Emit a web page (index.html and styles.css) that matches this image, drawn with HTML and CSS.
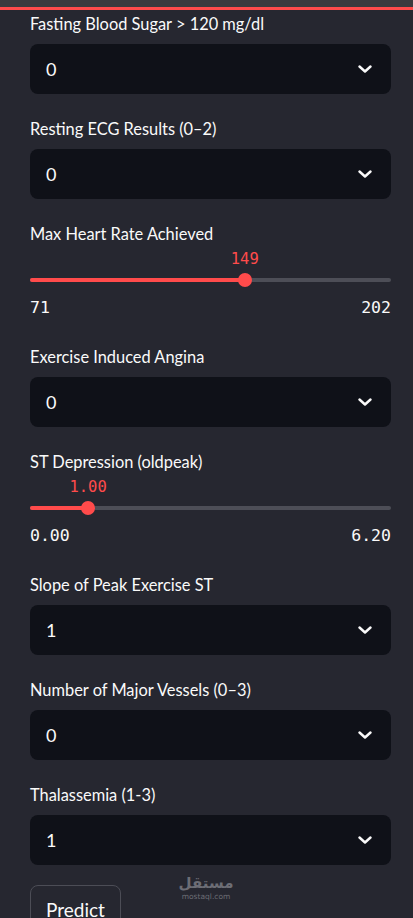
FILE: index.html
```html
<!DOCTYPE html>
<html lang="en">
<head>
  <meta charset="UTF-8">
  <meta name="viewport" content="width=device-width, initial-scale=1.0">
  <title>Heart Disease Prediction</title>
  <link rel="stylesheet" href="styles.css">
</head>
<body>
  <!-- Top decoration -->
  <div class="topbar"></div>
  <div class="decoration"></div>

  <div class="form">
    <div class="field">
      <label class="label">Fasting Blood Sugar &gt; 120 mg/dl</label>
      <div class="select">
        <span>0</span>
        <svg class="chevron" viewBox="0 0 14 8"><polyline points="1.5,1.5 7,6.5 12.5,1.5"/></svg>
      </div>
    </div>

    <div class="field">
      <label class="label">Resting ECG Results (0–2)</label>
      <div class="select">
        <span>0</span>
        <svg class="chevron" viewBox="0 0 14 8"><polyline points="1.5,1.5 7,6.5 12.5,1.5"/></svg>
      </div>
    </div>

    <div class="field slider-field">
      <label class="label">Max Heart Rate Achieved</label>
      <div class="slider">
        <div class="slider-value" style="left: 59.5%">149</div>
        <div class="track">
          <div class="fill" style="width: 59.5%"></div>
          <div class="thumb" style="left: 59.5%"></div>
        </div>
      </div>
      <div class="ticks">
        <span>71</span>
        <span>202</span>
      </div>
    </div>

    <div class="field">
      <label class="label">Exercise Induced Angina</label>
      <div class="select">
        <span>0</span>
        <svg class="chevron" viewBox="0 0 14 8"><polyline points="1.5,1.5 7,6.5 12.5,1.5"/></svg>
      </div>
    </div>

    <div class="field slider-field">
      <label class="label">ST Depression (oldpeak)</label>
      <div class="slider">
        <div class="slider-value" style="left: 16.1%">1.00</div>
        <div class="track">
          <div class="fill" style="width: 16.1%"></div>
          <div class="thumb" style="left: 16.1%"></div>
        </div>
      </div>
      <div class="ticks">
        <span>0.00</span>
        <span>6.20</span>
      </div>
    </div>

    <div class="field">
      <label class="label">Slope of Peak Exercise ST</label>
      <div class="select">
        <span>1</span>
        <svg class="chevron" viewBox="0 0 14 8"><polyline points="1.5,1.5 7,6.5 12.5,1.5"/></svg>
      </div>
    </div>

    <div class="field">
      <label class="label">Number of Major Vessels (0–3)</label>
      <div class="select">
        <span>0</span>
        <svg class="chevron" viewBox="0 0 14 8"><polyline points="1.5,1.5 7,6.5 12.5,1.5"/></svg>
      </div>
    </div>

    <div class="field">
      <label class="label">Thalassemia (1-3)</label>
      <div class="select">
        <span>1</span>
        <svg class="chevron" viewBox="0 0 14 8"><polyline points="1.5,1.5 7,6.5 12.5,1.5"/></svg>
      </div>
    </div>

    <button class="btn">Predict</button>
  </div>

  <!-- Watermark -->
  <div class="watermark">
    <span class="wm-ar">مستقل</span>
    <span class="wm-en">mostaql.com</span>
  </div>
</body>
</html>
```

FILE: styles.css
```css
/* General Reset */
* {
  margin: 0;
  padding: 0;
  box-sizing: border-box;
}

body {
  font-family: 'Lato', 'Noto Sans', sans-serif;
  background: #262730;
  color: #fafafa;
  overflow: hidden;
  position: relative;
  height: 918px;
}

/* Top decoration */
.topbar {
  height: 7px;
  background: #3b3a3e;
}

.decoration {
  height: 3px;
  background: #ff4b4b;
}

/* Form */
.form {
  display: flex;
  flex-direction: column;
  padding: 0 22px 0 30px;
}

.field {
  display: flex;
  flex-direction: column;
  margin-bottom: 21px;
}

.label {
  height: 28px;
  line-height: 28px;
  font-size: 16.4px;
  color: #fafafa;
  margin-bottom: 6px;
}

.select {
  height: 50px;
  background: #0f1118;
  border-radius: 8px;
  display: flex;
  align-items: center;
  justify-content: space-between;
  padding: 0 19px 0 16px;
  font-size: 18px;
}

.chevron {
  width: 14px;
  height: 8px;
  fill: none;
  stroke: #fafafa;
  stroke-width: 2.4;
  stroke-linecap: round;
  stroke-linejoin: round;
}

/* Sliders */
.slider-field {
  margin-bottom: 25px;
}

.slider-field .label {
  margin-bottom: 0;
}

.slider {
  position: relative;
  padding-top: 22px;
}

.slider-value {
  position: absolute;
  top: 0;
  height: 22px;
  line-height: 22px;
  transform: translateX(-50%);
  font-family: 'DejaVu Sans Mono', monospace;
  font-size: 15.5px;
  color: #ff4b4b;
}

.track {
  position: relative;
  height: 4px;
  margin: 8px 0;
  background: #4d4e57;
  border-radius: 2px;
}

.fill {
  height: 100%;
  background: #ff4b4b;
  border-radius: 2px;
}

.thumb {
  position: absolute;
  top: 50%;
  width: 14px;
  height: 14px;
  border-radius: 50%;
  background: #ff4b4b;
  transform: translate(-50%, -50%);
}

.ticks {
  display: flex;
  justify-content: space-between;
  margin-top: 8px;
  height: 20px;
  line-height: 20px;
  font-family: 'DejaVu Sans Mono', monospace;
  font-size: 16.5px;
  color: #fafafa;
}

/* Button */
.btn {
  align-self: flex-start;
  margin-top: -1px;
  height: 46px;
  padding: 4px 15px 0;
  background: #262730;
  border: 1px solid #4c4d56;
  border-radius: 8px;
  font-family: 'Lato', 'Noto Sans', sans-serif;
  font-size: 19px;
  color: #fafafa;
  line-height: 40px;
}

/* Watermark */
.watermark {
  position: absolute;
  left: 180px;
  top: 875px;
  width: 52px;
  display: flex;
  flex-direction: column;
  align-items: center;
  color: #6c6d75;
  pointer-events: none;
}

.wm-ar {
  font-family: 'DejaVu Sans', sans-serif;
  font-size: 15px;
  font-weight: bold;
  line-height: 17px;
}

.wm-en {
  font-family: 'DejaVu Sans', sans-serif;
  font-size: 7.5px;
  line-height: 9px;
}
```
